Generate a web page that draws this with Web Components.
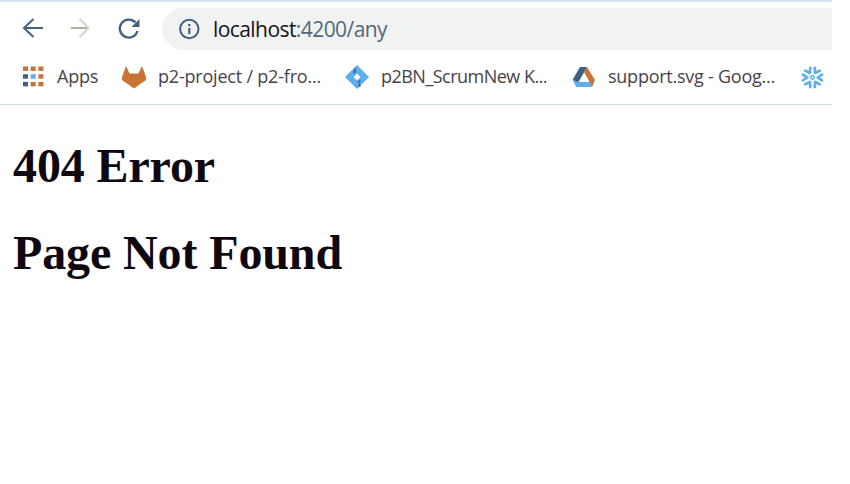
<!DOCTYPE html>
<html lang="en"><head><meta charset="utf-8"><title>404 Error</title>
<style>html,body{margin:0;background:#fff}body{width:850px;height:484px;overflow:hidden}</style></head>
<body>
<browser-window>
<nav-bar slot="nav"><fitted-text slot="address" width="174"><span style="color:#17131b">localhost</span>:4200/any</fitted-text></nav-bar>
<bookmarks-bar slot="bookmarks">
<book-mark icon="apps" style="width:100px"><fitted-text width="41">Apps</fitted-text></book-mark>
<book-mark icon="fox" style="width:223px"><fitted-text width="163">p2-project / p2-fro...</fitted-text></book-mark>
<book-mark icon="diamond" style="width:227px"><fitted-text width="166">p2BN_ScrumNew K...</fitted-text></book-mark>
<book-mark icon="drive" style="width:228px"><fitted-text width="167">support.svg - Goog...</fitted-text></book-mark>
<book-mark icon="flake" style="width:26px"></book-mark>
</bookmarks-bar>
<error-page><fitted-text slot="title" width="202">404 Error</fitted-text><fitted-text slot="detail" width="329">Page Not Found</fitted-text></error-page>
</browser-window>
<script>
const define=(name,html,ready)=>customElements.define(name,class extends HTMLElement{
 connectedCallback(){if(this.shadowRoot)return;const t=document.createElement('template');t.innerHTML=html;this.attachShadow({mode:'open'}).append(t.content.cloneNode(true));if(ready)ready(this);}
});
define('browser-window',`<style>:host{display:block;width:832px;border-top:2px solid #d6e0ea;box-sizing:border-box}</style><slot name="nav"></slot><slot name="bookmarks"></slot><slot></slot>`);
define('nav-bar',`<style>
:host{display:flex;height:54px;padding:6px 0 0 21px;box-sizing:border-box;color:#526880;font:21px/42px "Open Sans","Noto Sans",sans-serif}
svg{width:24px;height:24px;margin:9px 24px 0 0;flex:none;fill:none;stroke:#426080;stroke-width:2}
.address{display:flex;flex:1;height:42px;background:#f1f3f3;border-radius:21px 0 0 21px;margin-left:-3px}
.address svg{margin:9px 12px 0 15px}
</style>
<svg viewBox="0 0 24 24"><path d="M22 11H3M12.500 2 3 11l9.500 9"/></svg>
<svg viewBox="0 0 24 24"><path d="M2 11h18" stroke="#b9ab98"/><path d="m10.500 2 9 9-9 9" stroke="#d3d5ce"/></svg>
<svg viewBox="0 0 24 24"><path d="M18.500 5.500A9 9 0 1 0 20.500 14" stroke-width="2.300"/><path d="M22.500 2v8h-8z" fill="#426080" stroke="none"/></svg>
<div class="address"><svg viewBox="0 0 24 24"><circle cx="12.300" cy="12" r="9.200"/><path d="M12.300 11v6M12.300 7v2.200" stroke-width="2.200"/></svg><slot name="address"></slot></div>`);
define('bookmarks-bar',`<style>:host{display:flex;height:49px;border-bottom:1px solid #d2dce5;padding-left:21px;box-sizing:border-box;color:#45434a;font:18px/41px "Open Sans","Noto Sans",sans-serif}</style><slot></slot>`);
const icons={
apps:[0,1,2].map(y=>[0,1,2].map(x=>`<path fill="${x==1&&y==1?'#5daeed':x==0&&y>0?'#42607f':'#c97435'}" d="M${2+x*7.700} ${1.500+y*7.700}h5v4.500h-5z"/>`).join('')).join(''),
fox:`<path fill="#c97435" d="M1 12 5 1l3.500 7.500h9L21 1l4 11v3l-12 8.500L1 15z"/>`,
diamond:`<path fill="#5daeed" d="M13 0 25 12 13 24 1 12z"/><path fill="#355d8a" d="m11 2 1 5-3 2 1-3zM14 16l3-1-2 3 2 3-2 1z"/><path fill="#fff" d="m13 8.500 3.500 3.500-3.500 3.500L9.500 12z"/>`,
drive:`<path fill="#42607f" d="M9 2h7l-9 16-4-1-1-3z"/><path fill="#c97435" d="M13 7 16 2l8 13-3 7z"/><path fill="#5daeed" d="M2 15l5 2h12l2 5H5z"/><path fill="#fff" d="m13 8 5 8H9z"/>`,
flake:`<g fill="none" stroke="#5daeed" stroke-width="2.700" stroke-linecap="round" stroke-linejoin="round">${[30,90,150,210,270,330].map(a=>`<path transform="rotate(${a} 13.500 12.500)" d="M10.600 3l2.900 4.300L16.400 3"/>`).join('')}<circle cx="13.500" cy="12.500" r="1.700" stroke-width="1.500"/></g>`};
define('book-mark',`<style>:host{display:flex;flex:none;overflow:hidden}svg{width:26px;height:26px;margin:9px 11px 0 0;flex:none}</style><svg viewBox="0 0 26 26"></svg><slot></slot>`,e=>{
 e.shadowRoot.querySelector('svg').innerHTML=icons[e.getAttribute('icon')];
 if(e.getAttribute('icon')==='apps')e.shadowRoot.querySelector('svg').style.marginRight='10px';
});
define('error-page',`<style>:host{display:block;padding:36px 0 0 13px;color:#100810;font:bold 48px/50px "Liberation Serif",serif}h1{font:inherit;margin:0 0 37px}</style><h1><slot name="title"></slot></h1><h1><slot name="detail"></slot></h1>`);
// Distributes letter spacing so that the label fills its nominal width.
define('fitted-text',`<style>:host{display:inline-block;white-space:nowrap;flex:none}</style><span><slot></slot></span>`,e=>{
 const s=e.shadowRoot.querySelector('span');
 s.style.letterSpacing=((+e.getAttribute('width')-s.getBoundingClientRect().width)/e.textContent.length)+'px';
});
</script>
</body></html>
